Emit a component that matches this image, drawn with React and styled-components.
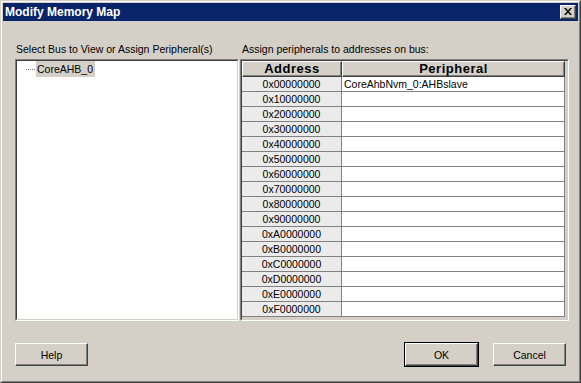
import React from "react";
import styled, { createGlobalStyle } from "styled-components";

const GlobalStyle = createGlobalStyle`
  html, body {
    margin: 0;
    padding: 0;
    background: #d4d0c8;
  }
  body {
    font-family: "Liberation Sans", Arial, sans-serif;
    font-size: 10.5px;
    color: #000;
  }
  * {
    box-sizing: border-box;
  }
`;

const ADDRESSES = [
  "0x00000000", "0x10000000", "0x20000000", "0x30000000",
  "0x40000000", "0x50000000", "0x60000000", "0x70000000",
  "0x80000000", "0x90000000", "0xA0000000", "0xB0000000",
  "0xC0000000", "0xD0000000", "0xE0000000", "0xF0000000"
];

const PERIPHERALS = { "0x00000000": "CoreAhbNvm_0:AHBslave" };

const Window = styled.div`
  width: 581px;
  height: 383px;
  border-style: solid;
  border-width: 1px;
  border-color: #d4d0c8 #404040 #404040 #d4d0c8;
`;

const Frame = styled.div`
  height: 100%;
  padding: 1px;
  border-style: solid;
  border-width: 1px;
  border-color: #fff #808080 #808080 #fff;
  display: flex;
  flex-direction: column;
`;

const Caption = styled.div`
  height: 18px;
  flex: none;
  background: #0a246a;
  display: flex;
  align-items: center;
  padding: 0 2px 0 2px;
`;

const CaptionTitle = styled.span`
  flex: 1;
  color: #fff;
  font-weight: bold;
  font-size: 12px;
  line-height: 18px;
`;

const CloseButton = styled.div`
  width: 16px;
  height: 14px;
  background: #d4d0c8;
  border-style: solid;
  border-width: 1px;
  border-color: #fff #404040 #404040 #fff;
  box-shadow: inset -1px -1px 0 #808080;
  display: flex;
  align-items: center;
  justify-content: center;
  padding: 0 1px 1px 0;
`;

const Body = styled.div`
  flex: 1;
  display: flex;
  flex-direction: column;
  padding-top: 22px;
`;

const Columns = styled.div`
  display: grid;
  grid-template-columns: 224px 329px;
  column-gap: 1px;
  padding-left: 12px;
`;

const Column = styled.div`
  display: flex;
  flex-direction: column;
`;

const Label = styled.div`
  height: 13px;
  line-height: 13px;
  margin-bottom: 3px;
  padding-left: ${p => p.$indent}px;
  white-space: nowrap;
`;

const Sunken = styled.div`
  height: 262px;
  border-style: solid;
  border-width: 1px;
  border-color: #808080 #fff #fff #808080;
`;

const SunkenInner = styled.div`
  height: 100%;
  border-style: solid;
  border-width: 1px;
  border-color: #404040 #d4d0c8 #d4d0c8 #404040;
  background: ${p => (p.$gray ? "#d4d0c8" : "#fff")};
  overflow: hidden;
`;

const TreeItem = styled.div`
  display: flex;
  align-items: center;
  height: 16px;
  padding-left: 9px;
`;

const TreeLine = styled.span`
  width: 9px;
  height: 0;
  border-top: 1px dotted #808080;
  margin-right: 1px;
`;

const TreeText = styled.span`
  background: #d4d0c8;
  line-height: 16px;
  padding: 0 2px 0 1px;
`;

const GridRow = styled.div`
  display: grid;
  grid-template-columns: 100px 223px;
  height: ${p => (p.$header ? 16 : 15)}px;
`;

const HeaderCell = styled.div`
  background: #d4d0c8;
  border-style: solid;
  border-width: 1px;
  border-color: #fff #404040 #404040 #fff;
  box-shadow: inset -1px -1px 0 #808080;
  font-weight: bold;
  font-size: 13px;
  letter-spacing: 0.5px;
  line-height: 13px;
  text-align: center;
`;

const Cell = styled.div`
  background: ${p => (p.$address ? "#ebebeb" : "#fff")};
  border-right: 1px solid #808080;
  border-bottom: 1px solid #808080;
  line-height: 14px;
  text-align: ${p => (p.$address ? "center" : "left")};
  padding-left: ${p => (p.$address ? 0 : 2)}px;
  white-space: nowrap;
  overflow: hidden;
`;

const ButtonRow = styled.div`
  display: flex;
  align-items: center;
  padding: 0 11px;
  margin-top: 21px;
  gap: 13px;
`;

const Spacer = styled.div`
  flex: 1;
`;

const ButtonOuter = styled.div`
  width: 75px;
  height: 25px;
  border: 1px solid ${p => (p.$default ? "#000" : "transparent")};
  display: flex;
`;

const Button = styled.div`
  flex: 1;
  background: #d4d0c8;
  border-style: solid;
  border-width: 1px;
  border-color: #fff #404040 #404040 #fff;
  box-shadow: inset -1px -1px 0 #808080;
  display: flex;
  align-items: center;
  justify-content: center;
  font-size: 10.5px;
`;

const PushButton = ({ children, isDefault }) => (
  <ButtonOuter $default={isDefault}>
    <Button>{children}</Button>
  </ButtonOuter>
);

export default function App() {
  return (
    <>
      <GlobalStyle />
      <Window>
        <Frame>
          <Caption>
            <CaptionTitle>Modify Memory Map</CaptionTitle>
            <CloseButton>
              <svg width="8" height="7" viewBox="0 0 8 7">
                <path d="M0 0h2l2 2.5 2-2.5h2l-3 3.5 3 3.5h-2l-2-2.5-2 2.5h-2l3-3.5z" fill="#000" />
              </svg>
            </CloseButton>
          </Caption>
          <Body>
            <Columns>
              <Column>
                <Label $indent={1}>Select Bus to View or Assign Peripheral(s)</Label>
                <Sunken>
                  <SunkenInner>
                    <TreeItem>
                      <TreeLine />
                      <TreeText>CoreAHB_0</TreeText>
                    </TreeItem>
                  </SunkenInner>
                </Sunken>
              </Column>
              <Column>
                <Label $indent={2}>Assign peripherals to addresses on bus:</Label>
                <Sunken>
                  <SunkenInner $gray>
                    <GridRow $header>
                      <HeaderCell>Address</HeaderCell>
                      <HeaderCell>Peripheral</HeaderCell>
                    </GridRow>
                    {ADDRESSES.map(a => (
                      <GridRow key={a}>
                        <Cell $address>{a}</Cell>
                        <Cell>{PERIPHERALS[a] || ""}</Cell>
                      </GridRow>
                    ))}
                  </SunkenInner>
                </Sunken>
              </Column>
            </Columns>
            <ButtonRow>
              <PushButton>Help</PushButton>
              <Spacer />
              <PushButton isDefault>OK</PushButton>
              <PushButton>Cancel</PushButton>
            </ButtonRow>
          </Body>
        </Frame>
      </Window>
    </>
  );
}
